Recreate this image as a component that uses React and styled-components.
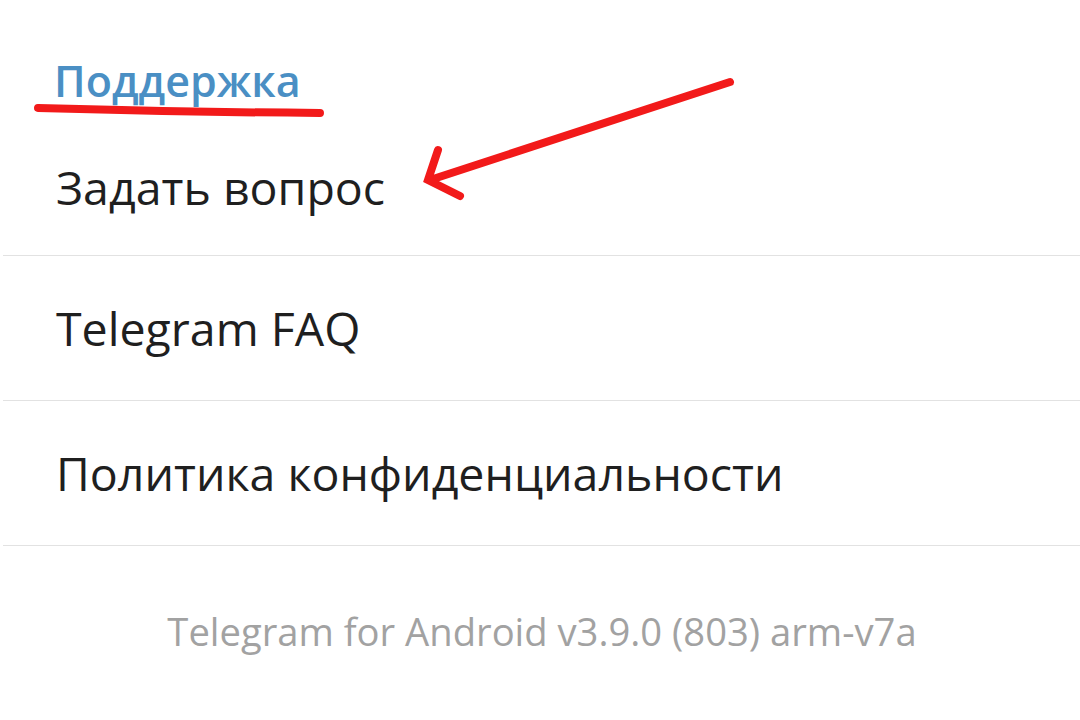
import styled, { createGlobalStyle } from "styled-components";

const GlobalStyle = createGlobalStyle`
  html, body {
    margin: 0;
    padding: 0;
    background: #ffffff;
  }
  body {
    font-family: "Open Sans", "Noto Sans", sans-serif;
  }
`;

const Page = styled.div`
  position: relative;
  width: 1080px;
  height: 720px;
  overflow: hidden;
  background: #ffffff;
`;

const Section = styled.div`
  display: flex;
  flex-direction: column;
`;

const SectionTitle = styled.div`
  height: 111px;
  display: flex;
  align-items: flex-end;
  padding-left: 54px;
  padding-bottom: 1px;
  box-sizing: border-box;
  font-size: 43px;
  font-weight: 600;
  color: #4a8fc4;
`;

const Row = styled.div`
  height: 145px;
  display: flex;
  align-items: center;
  padding-left: 53px;
  padding-top: ${(p) => (p.$first ? "8px" : "0")};
  box-sizing: border-box;
  font-size: 46.5px;
  color: #1f1f1f;
  border-bottom: 1.5px solid #e2e2e2;
  margin-left: 3px;
`;

const Version = styled.div`
  height: 170px;
  display: flex;
  align-items: center;
  justify-content: center;
  font-size: 38.2px;
  color: #a2a2a2;
  padding-left: 4px;
`;

const Marks = styled.svg`
  position: absolute;
  left: 0;
  top: 0;
  pointer-events: none;
`;

export default function App() {
  return (
    <Page>
      <GlobalStyle />
      <Section>
        <SectionTitle>Поддержка</SectionTitle>
        <Row $first>Задать вопрос</Row>
        <Row>Telegram FAQ</Row>
        <Row>Политика конфиденциальности</Row>
        <Version>Telegram for Android v3.9.0 (803) arm-v7a</Version>
      </Section>
      <Marks width="1080" height="720" viewBox="0 0 1080 720">
        <g stroke="#f21a1a" strokeWidth="8" strokeLinecap="round" fill="none">
          <path d="M38 108 Q180 112 320 113" />
          <path d="M730 82 L430 180" />
          <path d="M438 150 L428 180 L460 196" />
        </g>
      </Marks>
    </Page>
  );
}
